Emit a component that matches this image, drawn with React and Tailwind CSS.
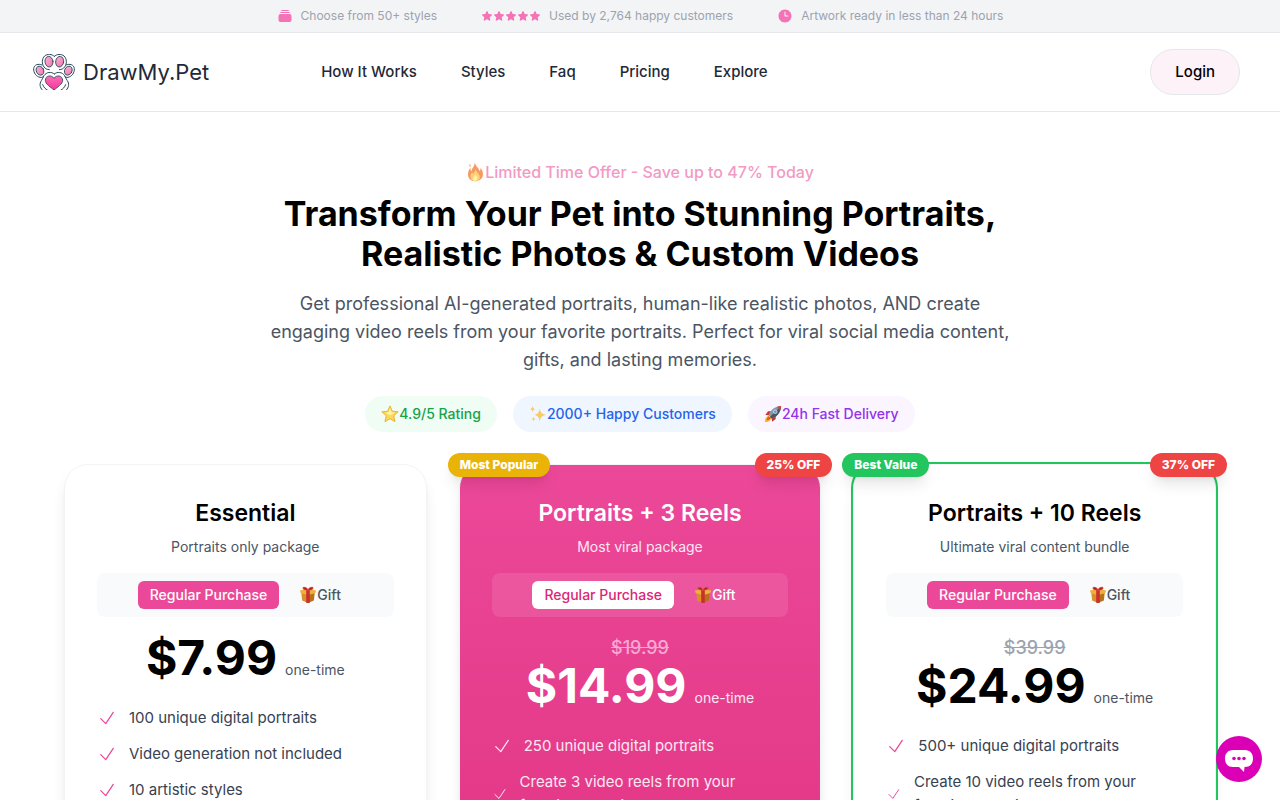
import { HiClock, HiRectangleStack, HiStar } from "react-icons/hi2";

const navLinks = ["How It Works", "Styles", "Faq", "Pricing", "Explore"];

const plans = [
  {
    name: "Essential",
    tagline: "Portraits only package",
    price: "$7.99",
    features: [
      "100 unique digital portraits",
      "Video generation not included",
      "10 artistic styles",
    ],
  },
  {
    name: "Portraits + 3 Reels",
    tagline: "Most viral package",
    price: "$14.99",
    oldPrice: "$19.99",
    badge: "Most Popular",
    discount: "25% OFF",
    featured: true,
    features: [
      "250 unique digital portraits",
      "Create 3 video reels from your favorite portraits",
    ],
  },
  {
    name: "Portraits + 10 Reels",
    tagline: "Ultimate viral content bundle",
    price: "$24.99",
    oldPrice: "$39.99",
    badge: "Best Value",
    discount: "37% OFF",
    best: true,
    features: [
      "500+ unique digital portraits",
      "Create 10 video reels from your favorite portraits",
    ],
  },
];

function PawLogo() {
  return (
    <svg viewBox="0 0 126 110" className="w-[42px] shrink-0" fill="none" aria-hidden="true">
      <defs>
        <linearGradient id="toe" x1="0" y1="0" x2="1" y2="1">
          <stop offset="0" stopColor="#fbb4d4" />
          <stop offset="1" stopColor="#f472ae" />
        </linearGradient>
        <linearGradient id="heart" x1="0" y1="0" x2="0" y2="1">
          <stop offset="0" stopColor="#fb6fb5" />
          <stop offset="1" stopColor="#f8359a" />
        </linearGradient>
      </defs>
      <g stroke="#27465a" strokeWidth="3" strokeLinecap="round" strokeLinejoin="round">
        {/* Outline of the paw */}
        <path d="M64 7C57 0 43-1 35 6c-9 8-9 24-2 33 4 5 9 8 16 8M64 7c7-7 21-8 29-1 9 8 9 24 2 33-4 5-9 8-16 8" />
        <path d="M27 33C16 28 3 32 2 44c-1 12 8 24 19 26 4 1 7 0 9-2M99 33c11-5 24-1 25 11 1 12-8 24-19 26-4 1-7 0-9-2" />
        <path d="M64 60C55 52 40 54 33 65c-3 5-4 10-8 15-6 9-5 20 3 28M64 60c9-8 24-6 31 5 3 5 4 10 8 15 6 9 5 20-3 28" />
        <path d="M29 92c3 8 8 13 14 16M98 92c-3 8-8 13-14 16" />
        <g fill="url(#toe)" strokeWidth="2.5">
          <ellipse cx="48" cy="23" rx="12" ry="16" transform="rotate(-8 48 23)" />
          <ellipse cx="80" cy="23" rx="12" ry="16" transform="rotate(8 80 23)" />
          <ellipse cx="21" cy="50" rx="11" ry="14" transform="rotate(-28 21 50)" />
          <ellipse cx="106" cy="50" rx="11" ry="14" transform="rotate(28 106 50)" />
        </g>
        <path
          fill="url(#heart)"
          strokeWidth="2.5"
          d="M63 108C52 99 37 90 37 79c0-14 18-18 26-6 8-12 26-8 26 6 0 11-15 20-26 29z"
        />
      </g>
    </svg>
  );
}

function Fire() {
  return (
    <svg viewBox="0 0 20 24" className="h-5 w-[19px]" aria-hidden="true">
      <path
        fill="#f79a62"
        d="M9 1c1 4 5 6 6 10 1-1 1-3 1-4 3 4 4 8 2 12-2 3-5 4-8 4-5 0-9-3-9-8 0-3 1-6 3-8 0 2 0 3 1 4C6 7 9 5 9 1z"
      />
      <path
        fill="#fdd07a"
        d="M10 8c0 3 4 5 5 9 1 4-2 6-5 6s-6-2-6-6c0-2 1-3 2-5 0 1 1 2 2 2 0-2 2-3 2-6z"
      />
      <path fill="#fef0a5" d="M10 15c1 2 3 3 2 6-1 2-4 2-5 0-1-3 2-3 3-6z" />
      <path fill="#f9b98c" d="M3 2c1 1 2 2 1 4C2 5 2 4 3 2z" />
    </svg>
  );
}

function Star() {
  return (
    <svg viewBox="0 0 20 20" className="size-[18px]" aria-hidden="true">
      <path
        fill="#fcd95b"
        stroke="#e9ac2b"
        strokeWidth="1"
        strokeLinejoin="round"
        d="M10 1l2.600 5.900 6.400.7-4.800 4.300 1.400 6.600L10 15.200l-5.600 3.300 1.400-6.600L1 7.600l6.400-.7z"
      />
      <path fill="#fff3b0" d="M10 3.500l1.700 4.500 4 .5-5.700 2.500-5-2.500 3.500-.5z" />
    </svg>
  );
}

function Sparkles() {
  return (
    <svg viewBox="0 0 20 20" className="size-[18px]" fill="#f8cc63" aria-hidden="true">
      <path d="M12 4c.8 4.500 2 6 7 7-5 1-6.200 2.500-7 7-.8-4.500-2-6-6-7 4-1 5.200-2.500 6-7z" />
      <path d="M4 1c.4 2 1 3 3 3.500C5 5 4.400 6 4 8c-.4-2-1-3-3-3.500C3 4 3.600 3 4 1zM5 13c.3 1.500.8 2 2.500 2.500C5.800 16 5.300 16.500 5 18c-.3-1.500-.8-2-2.500-2.500C4.200 15 4.700 14.500 5 13z" />
    </svg>
  );
}

function Rocket() {
  return (
    <svg viewBox="0 0 20 20" className="size-[18px]" aria-hidden="true">
      <path fill="#f9b233" d="M5 12l3 3c-1 3-4 4-7 4 0-3 1-6 4-7z" />
      <path fill="#f0592b" d="M5.500 12.500l2 2c-1 2-2.500 2.500-4.500 2.500 0-2 .5-3.500 2.500-4.500z" />
      <path fill="#c9372c" d="M8 7H4.500L1.500 11l4 .5zM13 12v3.500l-4 3-.5-4z" />
      <path fill="#8b95a5" d="M5 11.500C7 6 11 1.500 19 1c-.5 8-5 12-10.500 14z" />
      <path fill="#4b5563" d="M8.500 15C14 13 18.500 9 19 1L6.500 13.200z" />
      <path fill="#d64335" d="M14.500 2C16 1.300 17.500 1 19 1c0 1.500-.4 3-1 4.500z" />
      <circle cx="12.500" cy="7.500" r="2" fill="#4aa3e0" stroke="#e5e7eb" strokeWidth=".8" />
    </svg>
  );
}

function Gift() {
  return (
    <svg viewBox="0 0 20 20" className="size-[18px]" aria-hidden="true">
      <path fill="#d9902a" d="M2.500 7L10 9.500V19l-6.500-3z" />
      <path fill="#b8701d" d="M17.500 7L10 9.500V19l6.500-3z" />
      <path fill="#eeb03c" d="M1 5l9-2 9 2-1 3-8 2-8-2z" />
      <path fill="#c9302c" d="M8 4h4v14.500l-2 .5-2-.5z" />
      <path fill="#e0403a" d="M10 5C7 5 3.500 4.500 4 2c.6-2 5-1 6 2 1-3 5.400-4 6-2 .5 2.500-3 3-6 3z" />
      <path fill="#8f1f1f" d="M9 4C7.500 4 5.500 3.700 5.700 2.600 6.200 1.700 8.500 2.500 9 4zM11 4c1.500 0 3.500-.3 3.300-1.400C13.800 1.700 11.500 2.500 11 4z" />
    </svg>
  );
}

function Check({ className }) {
  return (
    <svg
      viewBox="0 0 24 24"
      className={`h-5 w-5 ${className}`}
      fill="none"
      stroke="currentColor"
      strokeWidth="1.5"
      strokeLinecap="round"
      strokeLinejoin="round"
      aria-hidden="true"
    >
      <path d="M4.500 12.750l6 6 9-13.500" />
    </svg>
  );
}

function TopBar() {
  return (
    <div className="flex h-[33px] items-center justify-center gap-11 border-b border-gray-200 bg-[#f3f4f6] text-xs text-[#9ca3af]">
      <div className="flex items-center gap-2">
        <HiRectangleStack className="size-4 text-[#f472b6]" />
        <span>Choose from 50+ styles</span>
      </div>
      <div className="flex items-center gap-2">
        <div className="flex text-[#f472b6]">
          {[1, 2, 3, 4, 5].map((n) => (
            <HiStar key={n} className="size-3" />
          ))}
        </div>
        <span>Used by 2,764 happy customers</span>
      </div>
      <div className="flex items-center gap-2">
        <HiClock className="size-4 text-[#f472b6]" />
        <span>Artwork ready in less than 24 hours</span>
      </div>
    </div>
  );
}

function Header() {
  return (
    <header className="flex items-center border-b border-gray-200 py-4 pr-10 pl-[33px]">
      <a href="#" className="flex items-center gap-2 text-[22px] leading-8 text-[#1f2937]">
        <PawLogo />
        DrawMy.Pet
      </a>
      <nav className="ml-28 flex gap-11 text-[15px] leading-6 font-medium text-[#1f2937]">
        {navLinks.map((link) => (
          <a key={link} href="#">
            {link}
          </a>
        ))}
      </nav>
      <button className="ml-auto rounded-full border border-gray-200 bg-[#fdf2f8] px-6 py-2.5 text-[15px] leading-6 font-medium text-black">
        Login
      </button>
    </header>
  );
}

function PlanCard({ plan }) {
  const { featured, best } = plan;
  return (
    <div
      className={`relative rounded-3xl border border-gray-100 p-8 text-center shadow-lg ${
        featured ? "bg-linear-to-b from-[#ec4899] to-[#db2777] text-white" : "bg-white text-black"
      } ${best ? "ring-2 ring-[#22c55e]" : ""}`}
    >
      {plan.badge && (
        <span
          className={`absolute -top-3 -left-3 rounded-full px-3 py-1 text-xs font-extrabold text-white shadow-lg ${
            best ? "bg-[#22c55e]" : "bg-[#eab308]"
          }`}
        >
          {plan.badge}
        </span>
      )}
      {plan.discount && (
        <span className="absolute -top-3 -right-3 rounded-full bg-[#ef4444] px-3 py-1 text-xs font-extrabold text-white shadow-lg">
          {plan.discount}
        </span>
      )}

      <h3 className="text-[23px] leading-8 font-semibold">{plan.name}</h3>
      <p className={`mt-2 text-sm ${featured ? "text-[#fce7f3]" : "text-[#4b5563]"}`}>
        {plan.tagline}
      </p>

      {/* Purchase type */}
      <div
        className={`mt-4 flex justify-center gap-2 rounded-lg p-2 text-sm font-medium ${
          featured ? "bg-white/10" : "bg-[#f9fafb]"
        }`}
      >
        <button
          className={`rounded-md px-3 py-1 ${
            featured ? "bg-white text-[#db2777]" : "bg-[#ec4899] text-white"
          }`}
        >
          Regular Purchase
        </button>
        <button
          className={`flex items-center rounded-md px-3 py-1 ${
            featured ? "text-white" : "text-[#4b5563]"
          }`}
        >
          <Gift />
          Gift
        </button>
      </div>

      {/* Price */}
      <div className="mt-[17px]">
        {plan.oldPrice && (
          <p
            className={`text-lg leading-7 font-medium line-through ${
              featured ? "text-[#f9a8d4]" : "text-[#9ca3af]"
            }`}
          >
            {plan.oldPrice}
          </p>
        )}
        <p className="flex items-baseline justify-center gap-2">
          <span className="text-5xl leading-none font-bold">{plan.price}</span>
          <span className={`text-sm ${featured ? "text-[#fce7f3]" : "text-[#4b5563]"}`}>
            one-time
          </span>
        </p>
      </div>

      <ul className="mt-6 space-y-3 text-left text-[15px] leading-6">
        {plan.features.map((feature) => (
          <li key={feature} className="flex items-center gap-3">
            <Check className={featured ? "text-[#fce7f3]" : "text-[#ec4899]"} />
            <span className={featured ? "text-[#fce7f3]" : "text-[#374151]"}>{feature}</span>
          </li>
        ))}
      </ul>
    </div>
  );
}

export default function App() {
  return (
    <div className="bg-white font-['Inter',sans-serif]">
      <TopBar />
      <Header />

      <main className="mx-auto max-w-6xl pt-12 pb-16">
        <div className="mx-auto max-w-[750px] text-center">
          <p className="flex items-center justify-center font-medium text-[#f29ac4]">
            <Fire />
            Limited Time Offer - Save up to 47% Today
          </p>
          <h1 className="mt-2.5 text-[34px] leading-10 font-bold text-black">
            Transform Your Pet into Stunning Portraits, Realistic Photos &amp; Custom Videos
          </h1>
          <p className="mt-4 text-lg leading-7 text-[#4b5563]">
            Get professional AI-generated portraits, human-like realistic photos, AND create
            engaging video reels from your favorite portraits. Perfect for viral social media
            content, gifts, and lasting memories.
          </p>
        </div>

        <div className="mt-[22px] flex justify-center gap-4 text-sm font-medium">
          <span className="flex items-center rounded-full bg-[#f0fdf4] px-4 py-2 text-[#16a34a]">
            <Star />
            4.9/5 Rating
          </span>
          <span className="flex items-center rounded-full bg-[#eff6ff] px-4 py-2 text-[#2563eb]">
            <Sparkles />
            2000+ Happy Customers
          </span>
          <span className="flex items-center rounded-full bg-[#faf5ff] px-4 py-2 text-[#9333ea]">
            <Rocket />
            24h Fast Delivery
          </span>
        </div>

        <div className="mt-8 grid min-h-[700px] grid-cols-3 gap-8">
          {plans.map((plan) => (
            <PlanCard key={plan.name} plan={plan} />
          ))}
        </div>
      </main>

      <button
        aria-label="Open chat"
        className="fixed right-[18px] bottom-[18px] flex size-[46px] items-center justify-center rounded-full bg-[#db00b6] pt-1"
      >
        <svg viewBox="0 0 30 24" className="w-[30px]" aria-hidden="true">
          <path
            fill="#fff"
            d="M9 1h12c5 0 8 3.500 8 8.500S26 18 21 18h-.500l-.5 5-5-5H9c-5 0-8-3.500-8-8.500S4 1 9 1z"
          />
          <g fill="#db00b6">
            <circle cx="10" cy="9.500" r="1.800" />
            <circle cx="15" cy="9.500" r="1.800" />
            <circle cx="20" cy="9.500" r="1.800" />
          </g>
        </svg>
      </button>
    </div>
  );
}
